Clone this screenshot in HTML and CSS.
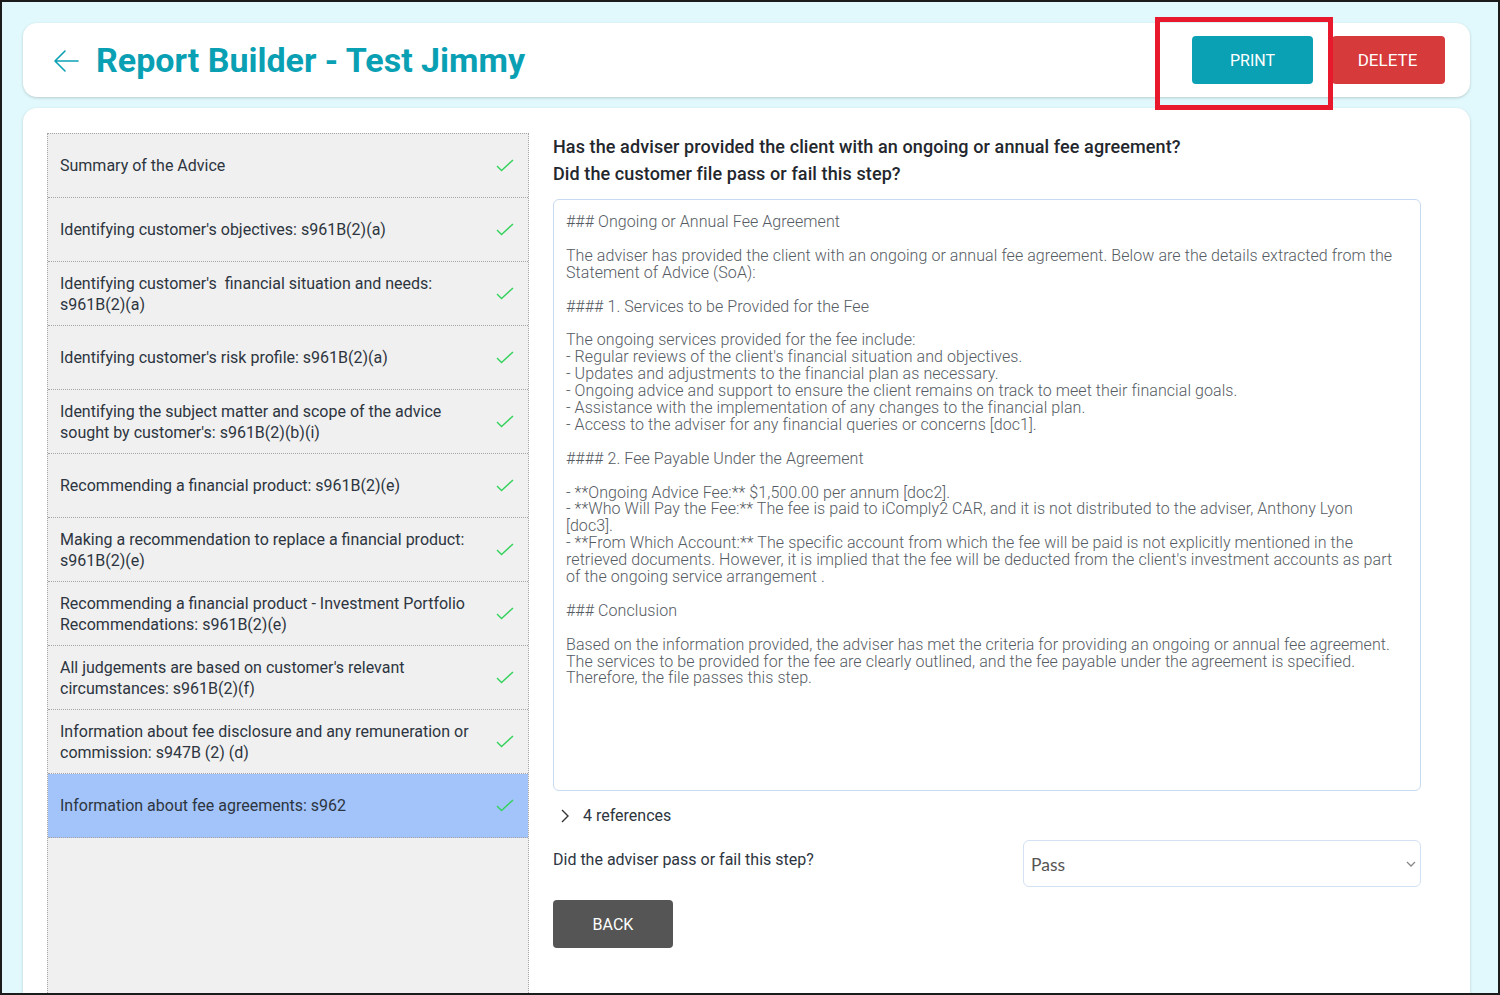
FILE: index.html
```html
<!DOCTYPE html>
<html lang="en">
<head>
<meta charset="utf-8">
<title>Report Builder - Test Jimmy</title>
<link rel="stylesheet" href="styles.css">
</head>
<body>
<div class="frame">
  <header class="card header">
    <div class="title-wrap">
      <svg class="back-arrow" width="26" height="24" viewBox="0 0 26 24" fill="none" stroke="#0ba1b5" stroke-width="1.6" stroke-linecap="round" stroke-linejoin="round"><path d="M25 12H2M12 2L2 12L12 22"/></svg>
      <h1 class="title">Report Builder - Test Jimmy</h1>
    </div>
    <div class="actions">
      <button class="btn btn-print">PRINT</button>
      <button class="btn btn-delete">DELETE</button>
      <div class="highlight"></div>
    </div>
  </header>

  <main class="card main">
    <nav class="steps">
      <div class="step"><span>Summary of the Advice</span><svg class="check" viewBox="0 0 18 13"><path d="M1 7L5.5 11.5L17 1"/></svg></div>
      <div class="step"><span>Identifying customer's objectives: s961B(2)(a)</span><svg class="check" viewBox="0 0 18 13"><path d="M1 7L5.5 11.5L17 1"/></svg></div>
      <div class="step"><span>Identifying customer's&nbsp; financial situation and needs: s961B(2)(a)</span><svg class="check" viewBox="0 0 18 13"><path d="M1 7L5.5 11.5L17 1"/></svg></div>
      <div class="step"><span>Identifying customer's risk profile: s961B(2)(a)</span><svg class="check" viewBox="0 0 18 13"><path d="M1 7L5.5 11.5L17 1"/></svg></div>
      <div class="step"><span>Identifying the subject matter and scope of the advice sought by customer's: s961B(2)(b)(i)</span><svg class="check" viewBox="0 0 18 13"><path d="M1 7L5.5 11.5L17 1"/></svg></div>
      <div class="step"><span>Recommending a financial product: s961B(2)(e)</span><svg class="check" viewBox="0 0 18 13"><path d="M1 7L5.5 11.5L17 1"/></svg></div>
      <div class="step"><span>Making a recommendation to replace a financial product: s961B(2)(e)</span><svg class="check" viewBox="0 0 18 13"><path d="M1 7L5.5 11.5L17 1"/></svg></div>
      <div class="step"><span>Recommending a financial product - Investment Portfolio Recommendations: s961B(2)(e)</span><svg class="check" viewBox="0 0 18 13"><path d="M1 7L5.5 11.5L17 1"/></svg></div>
      <div class="step"><span>All judgements are based on customer's relevant circumstances: s961B(2)(f)</span><svg class="check" viewBox="0 0 18 13"><path d="M1 7L5.5 11.5L17 1"/></svg></div>
      <div class="step"><span>Information about fee disclosure and any remuneration or commission: s947B (2) (d)</span><svg class="check" viewBox="0 0 18 13"><path d="M1 7L5.5 11.5L17 1"/></svg></div>
      <div class="step active"><span>Information about fee agreements: s962</span><svg class="check" viewBox="0 0 18 13"><path d="M1 7L5.5 11.5L17 1"/></svg></div>
    </nav>

    <section class="detail">
      <h2 class="question">Has the adviser provided the client with an ongoing or annual fee agreement?<br>Did the customer file pass or fail this step?</h2>
      <div class="answer">### Ongoing or Annual Fee Agreement

The adviser has provided the client with an ongoing or annual fee agreement. Below are the details extracted from the
Statement of Advice (SoA):

#### 1. Services to be Provided for the Fee

The ongoing services provided for the fee include:
- Regular reviews of the client's financial situation and objectives.
- Updates and adjustments to the financial plan as necessary.
- Ongoing advice and support to ensure the client remains on track to meet their financial goals.
- Assistance with the implementation of any changes to the financial plan.
- Access to the adviser for any financial queries or concerns [doc1].

#### 2. Fee Payable Under the Agreement

- **Ongoing Advice Fee:** $1,500.00 per annum [doc2].
- **Who Will Pay the Fee:** The fee is paid to iComply2 CAR, and it is not distributed to the adviser, Anthony Lyon
[doc3].
- **From Which Account:** The specific account from which the fee will be paid is not explicitly mentioned in the
retrieved documents. However, it is implied that the fee will be deducted from the client's investment accounts as part
of the ongoing service arrangement .

### Conclusion

Based on the information provided, the adviser has met the criteria for providing an ongoing or annual fee agreement.
The services to be provided for the fee are clearly outlined, and the fee payable under the agreement is specified.
Therefore, the file passes this step.</div>

      <div class="refs">
        <svg class="chev-right" width="10" height="14" viewBox="0 0 10 14" fill="none" stroke="#333" stroke-width="1.4"><path d="M2 1L8 7L2 13"/></svg>
        <span>4 references</span>
      </div>

      <div class="verdict">
        <label class="verdict-label">Did the adviser pass or fail this step?</label>
        <div class="select">
          <span>Pass</span>
          <svg width="10" height="7" viewBox="0 0 10 7" fill="none" stroke="#888" stroke-width="1.3"><path d="M1 1L5 5L9 1"/></svg>
        </div>
      </div>

      <button class="btn btn-back">BACK</button>
    </section>
  </main>
</div>
</body>
</html>
```

FILE: styles.css
```css
* { box-sizing: border-box; }
html, body { margin: 0; padding: 0; }
body {
  font-family: Roboto, "Liberation Sans", sans-serif;
  background: #e1f8fb;
}
.frame {
  width: 1500px;
  height: 995px;
  border: 2px solid #1c1c1c;
  background: #e1f9fc;
  padding: 21px 28px 0 21px;
  overflow: hidden;
  display: flex;
  flex-direction: column;
  gap: 11px;
}
.card {
  background: #fff;
  border-radius: 14px;
  box-shadow: 0 1px 3px rgba(0,0,0,0.18);
}
.header {
  height: 74px;
  display: flex;
  align-items: center;
  justify-content: space-between;
  padding: 0 25px 0 30px;
  flex-shrink: 0;
}
.title-wrap { display: flex; align-items: center; gap: 17px; }
.back-arrow { display: block; margin-top: 2px; }
.title {
  margin: 0;
  font-size: 34px;
  font-weight: 700;
  color: #0aa0b4;
  letter-spacing: 0;
}
.actions { position: relative; display: flex; gap: 19px; align-items: center; }
.btn {
  border: none;
  border-radius: 4px;
  color: #fff;
  font-family: Roboto, "Liberation Sans", sans-serif;
  font-size: 16px;
  height: 48px;
  cursor: pointer;
}
.btn-print { width: 121px; background: #0ba1b5; }
.btn-delete { width: 113px; background: #d63a3b; padding-right: 8px; font-size: 17px; }
.highlight {
  position: absolute;
  left: -37px;
  top: -19px;
  width: 178px;
  height: 93px;
  border: 5px solid #e8192c;
  pointer-events: none;
}
.main {
  flex: 1;
  border-radius: 14px 14px 0 0;
  display: flex;
  padding: 25px 49px 0 24px;
  gap: 24px;
}
.steps {
  width: 482px;
  flex-shrink: 0;
  background: #f0f0f0;
  border: 1px dotted #a6a6a6;
  border-bottom: none;
}
.step {
  height: 64px;
  display: flex;
  align-items: center;
  justify-content: space-between;
  padding: 0 14px 0 12px;
  border-bottom: 1px dotted #a6a6a6;
  color: #2d3540;
  font-size: 16px;
  line-height: 21px;
}
.step span { max-width: 420px; }
.step.active { background: #a2c4fb; }
.check {
  width: 18px;
  height: 13px;
  fill: none;
  stroke: #34d35c;
  stroke-width: 1.4;
  flex-shrink: 0;
}
.detail { flex: 1; display: flex; flex-direction: column; }
.question {
  margin: 0;
  font-size: 18px;
  font-weight: 500;
  line-height: 27px;
  color: #23272d;
  letter-spacing: 0.1px;
}
.answer {
  margin-top: 12px;
  height: 592px;
  border: 1px solid #c7daf1;
  border-radius: 6px;
  padding: 14px 12px;
  white-space: pre;
  overflow: hidden;
  font-size: 16px;
  font-weight: 300;
  line-height: 16.9px;
  letter-spacing: 0.07px;
  color: #555b63;
}
.refs {
  display: flex;
  align-items: center;
  gap: 13px;
  margin-top: 16px;
  padding-left: 7px;
  height: 17px;
  font-size: 16px;
  color: #2d3540;
}
.chev-right { display: block; }
.verdict {
  display: flex;
  justify-content: space-between;
  align-items: flex-start;
  margin-top: 16px;
}
.verdict-label {
  font-size: 16px;
  color: #2d3540;
  line-height: 21px;
  margin-top: 9px;
}
.select {
  width: 398px;
  height: 47px;
  border: 1px solid #d3e2f4;
  border-radius: 6px;
  display: flex;
  align-items: center;
  justify-content: space-between;
  padding: 1px 4px 0 7px;
  font-family: Lato, "Open Sans", sans-serif;
  font-size: 17.5px;
  color: #555;
}
.btn-back {
  margin-top: 13px;
  width: 120px;
  background: #555;
  align-self: flex-start;
}
```
